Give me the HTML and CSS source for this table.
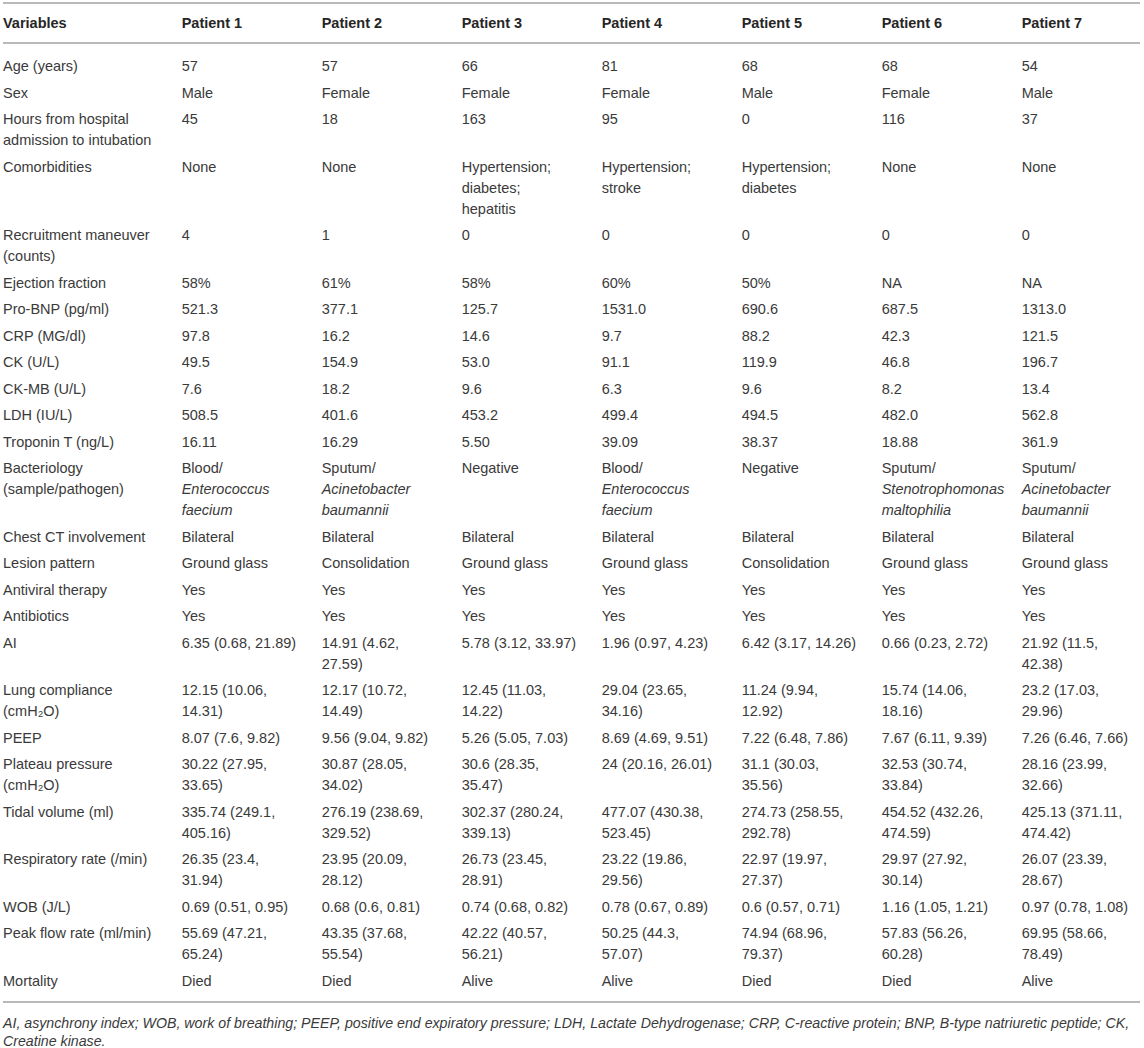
FILE: index.html
```html
<!DOCTYPE html>
<html lang="en">
<head>
<meta charset="utf-8">
<title>Patient characteristics</title>
<link rel="stylesheet" href="styles.css">
</head>
<body>
<div class="page">
<table class="data">
<colgroup>
<col class="c-var"><col class="c-p"><col class="c-p"><col class="c-p"><col class="c-p"><col class="c-p"><col class="c-p"><col class="c-last">
</colgroup>
<thead>
<tr><th>Variables</th><th>Patient 1</th><th>Patient 2</th><th>Patient 3</th><th>Patient 4</th><th>Patient 5</th><th>Patient 6</th><th>Patient 7</th></tr>
</thead>
<tbody>
<tr><td>Age (years)</td><td>57</td><td>57</td><td>66</td><td>81</td><td>68</td><td>68</td><td>54</td></tr>
<tr><td>Sex</td><td>Male</td><td>Female</td><td>Female</td><td>Female</td><td>Male</td><td>Female</td><td>Male</td></tr>
<tr><td>Hours from hospital admission to intubation</td><td>45</td><td>18</td><td>163</td><td>95</td><td>0</td><td>116</td><td>37</td></tr>
<tr><td>Comorbidities</td><td>None</td><td>None</td><td>Hypertension;<br>diabetes;<br>hepatitis</td><td>Hypertension; stroke</td><td>Hypertension; diabetes</td><td>None</td><td>None</td></tr>
<tr><td>Recruitment maneuver (counts)</td><td>4</td><td>1</td><td>0</td><td>0</td><td>0</td><td>0</td><td>0</td></tr>
<tr><td>Ejection fraction</td><td>58%</td><td>61%</td><td>58%</td><td>60%</td><td>50%</td><td>NA</td><td>NA</td></tr>
<tr><td>Pro-BNP (pg/ml)</td><td>521.3</td><td>377.1</td><td>125.7</td><td>1531.0</td><td>690.6</td><td>687.5</td><td>1313.0</td></tr>
<tr><td>CRP (MG/dl)</td><td>97.8</td><td>16.2</td><td>14.6</td><td>9.7</td><td>88.2</td><td>42.3</td><td>121.5</td></tr>
<tr><td>CK (U/L)</td><td>49.5</td><td>154.9</td><td>53.0</td><td>91.1</td><td>119.9</td><td>46.8</td><td>196.7</td></tr>
<tr><td>CK-MB (U/L)</td><td>7.6</td><td>18.2</td><td>9.6</td><td>6.3</td><td>9.6</td><td>8.2</td><td>13.4</td></tr>
<tr><td>LDH (IU/L)</td><td>508.5</td><td>401.6</td><td>453.2</td><td>499.4</td><td>494.5</td><td>482.0</td><td>562.8</td></tr>
<tr><td>Troponin T (ng/L)</td><td>16.11</td><td>16.29</td><td>5.50</td><td>39.09</td><td>38.37</td><td>18.88</td><td>361.9</td></tr>
<tr><td>Bacteriology (sample/pathogen)</td><td>Blood/ <i>Enterococcus faecium</i></td><td>Sputum/ <i>Acinetobacter baumannii</i></td><td>Negative</td><td>Blood/ <i>Enterococcus faecium</i></td><td>Negative</td><td>Sputum/ <i>Stenotrophomonas maltophilia</i></td><td>Sputum/ <i>Acinetobacter baumannii</i></td></tr>
<tr><td>Chest CT involvement</td><td>Bilateral</td><td>Bilateral</td><td>Bilateral</td><td>Bilateral</td><td>Bilateral</td><td>Bilateral</td><td>Bilateral</td></tr>
<tr><td>Lesion pattern</td><td>Ground glass</td><td>Consolidation</td><td>Ground glass</td><td>Ground glass</td><td>Consolidation</td><td>Ground glass</td><td>Ground glass</td></tr>
<tr><td>Antiviral therapy</td><td>Yes</td><td>Yes</td><td>Yes</td><td>Yes</td><td>Yes</td><td>Yes</td><td>Yes</td></tr>
<tr><td>Antibiotics</td><td>Yes</td><td>Yes</td><td>Yes</td><td>Yes</td><td>Yes</td><td>Yes</td><td>Yes</td></tr>
<tr><td>AI</td><td>6.35 (0.68, 21.89)</td><td>14.91 (4.62, 27.59)</td><td>5.78 (3.12, 33.97)</td><td>1.96 (0.97, 4.23)</td><td>6.42 (3.17, 14.26)</td><td>0.66 (0.23, 2.72)</td><td>21.92 (11.5, 42.38)</td></tr>
<tr><td>Lung compliance (cmH₂O)</td><td>12.15 (10.06, 14.31)</td><td>12.17 (10.72, 14.49)</td><td>12.45 (11.03, 14.22)</td><td>29.04 (23.65, 34.16)</td><td>11.24 (9.94, 12.92)</td><td>15.74 (14.06, 18.16)</td><td>23.2 (17.03, 29.96)</td></tr>
<tr><td>PEEP</td><td>8.07 (7.6, 9.82)</td><td>9.56 (9.04, 9.82)</td><td>5.26 (5.05, 7.03)</td><td>8.69 (4.69, 9.51)</td><td>7.22 (6.48, 7.86)</td><td>7.67 (6.11, 9.39)</td><td>7.26 (6.46, 7.66)</td></tr>
<tr><td>Plateau pressure (cmH₂O)</td><td>30.22 (27.95, 33.65)</td><td>30.87 (28.05, 34.02)</td><td>30.6 (28.35, 35.47)</td><td>24 (20.16, 26.01)</td><td>31.1 (30.03, 35.56)</td><td>32.53 (30.74, 33.84)</td><td>28.16 (23.99, 32.66)</td></tr>
<tr><td>Tidal volume (ml)</td><td>335.74 (249.1, 405.16)</td><td>276.19 (238.69, 329.52)</td><td>302.37 (280.24, 339.13)</td><td>477.07 (430.38, 523.45)</td><td>274.73 (258.55, 292.78)</td><td>454.52 (432.26, 474.59)</td><td>425.13 (371.11, 474.42)</td></tr>
<tr><td>Respiratory rate (/min)</td><td>26.35 (23.4, 31.94)</td><td>23.95 (20.09, 28.12)</td><td>26.73 (23.45, 28.91)</td><td>23.22 (19.86, 29.56)</td><td>22.97 (19.97, 27.37)</td><td>29.97 (27.92, 30.14)</td><td>26.07 (23.39, 28.67)</td></tr>
<tr><td>WOB (J/L)</td><td>0.69 (0.51, 0.95)</td><td>0.68 (0.6, 0.81)</td><td>0.74 (0.68, 0.82)</td><td>0.78 (0.67, 0.89)</td><td>0.6 (0.57, 0.71)</td><td>1.16 (1.05, 1.21)</td><td>0.97 (0.78, 1.08)</td></tr>
<tr><td>Peak flow rate (ml/min)</td><td>55.69 (47.21, 65.24)</td><td>43.35 (37.68, 55.54)</td><td>42.22 (40.57, 56.21)</td><td>50.25 (44.3, 57.07)</td><td>74.94 (68.96, 79.37)</td><td>57.83 (56.26, 60.28)</td><td>69.95 (58.66, 78.49)</td></tr>
<tr><td>Mortality</td><td>Died</td><td>Died</td><td>Alive</td><td>Alive</td><td>Died</td><td>Died</td><td>Alive</td></tr>
</tbody>
</table>
<p class="note">AI, asynchrony index; WOB, work of breathing; PEEP, positive end expiratory pressure; LDH, Lactate Dehydrogenase; CRP, C-reactive protein; BNP, B-type natriuretic peptide; CK, Creatine kinase.</p>
</div>
</body>
</html>
```

FILE: styles.css
```css
html, body {
  margin: 0;
  padding: 0;
  background: #ffffff;
}

body {
  font-family: "Liberation Sans", Arial, Helvetica, sans-serif;
  color: #3a3a3a;
}

.page {
  padding: 2px 4px 0 3px;
}

.data {
  border-collapse: collapse;
  table-layout: fixed;
  width: 1137px;
}

.c-var { width: 178.7px; }
.c-p { width: 140px; }

.data th,
.data td {
  text-align: left;
  vertical-align: top;
  font-size: 14.5px;
  line-height: 21px;
  padding: 2.75px 22px 2.75px 0;
}

.data th {
  font-weight: bold;
  color: #262626;
  line-height: 21.5px;
  padding-top: 8.5px;
  padding-bottom: 8px;
  border-top: 2px solid #b9b9b9;
  border-bottom: 2px solid #b9b9b9;
}

.data td:first-child { padding-right: 20px; }
.data td:last-child,
.data th:last-child { padding-right: 0; }

.data tbody tr:first-child td { padding-top: 12px; }
.data tbody tr:last-child td {
  padding-bottom: 9px;
  border-bottom: 2px solid #b9b9b9;
}

.note {
  margin: 11px 0 0;
  width: 1137px;
  font-size: 14.2px;
  line-height: 18px;
  font-style: italic;
  color: #3a3a3a;
}
```
